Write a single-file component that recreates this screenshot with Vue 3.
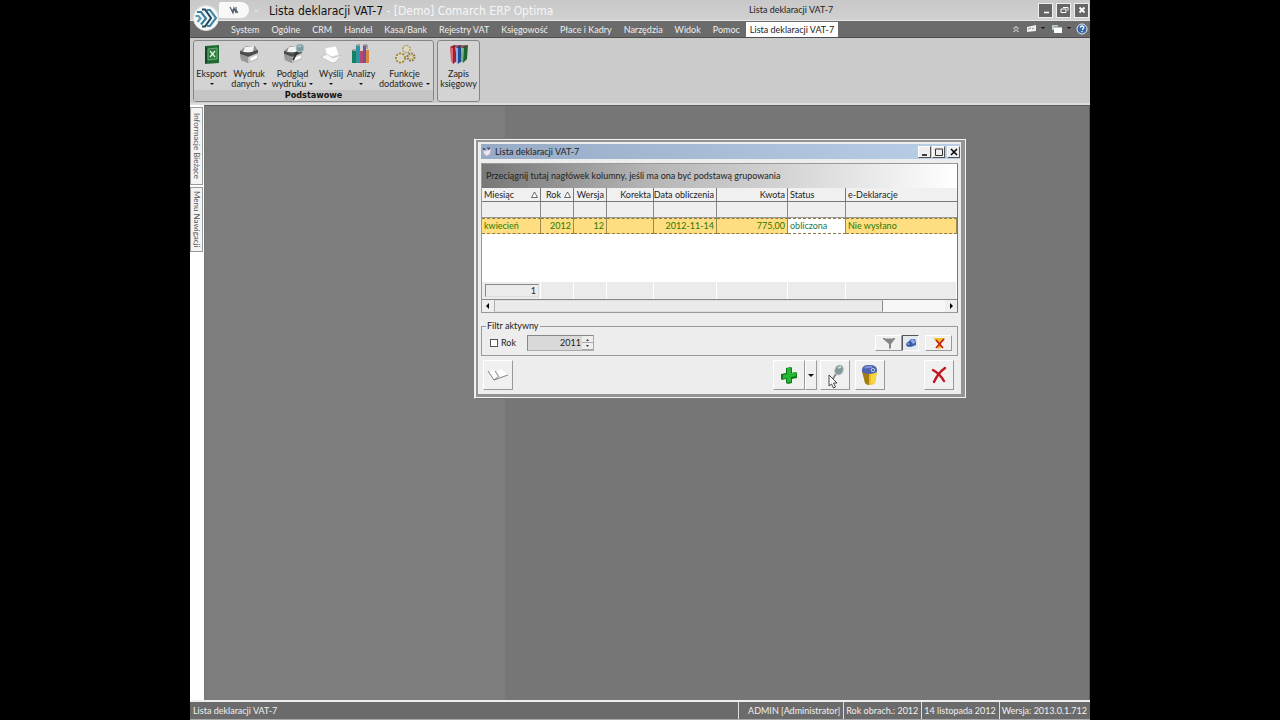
<script setup>
import { ref } from 'vue'

const menus = ['System', 'Ogólne', 'CRM', 'Handel', 'Kasa/Bank', 'Rejestry VAT', 'Księgowość', 'Płace i Kadry', 'Narzędzia', 'Widok', 'Pomoc']
const tools = [
  { id: 'export', a: 'Eksport', b: '', w: 'w35' },
  { id: 'print', a: 'Wydruk', b: 'danych', w: 'w40' },
  { id: 'preview', a: 'Podgląd', b: 'wydruku', w: 'w47' },
  { id: 'send', a: 'Wyślij', b: '', w: 'w30' },
  { id: 'chart', a: 'Analizy', b: '', w: 'w30' },
  { id: 'gears', a: 'Funkcje', b: 'dodatkowe', w: 'w57' },
]
const cols = [
  { t: 'Miesiąc', v: 'kwiecień', s: true, c: 'c1' },
  { t: 'Rok', v: '2012', s: true, r: true, c: 'c2' },
  { t: 'Wersja', v: '12', r: true, c: 'c2' },
  { t: 'Korekta', v: '', r: true, c: 'c3' },
  { t: 'Data obliczenia', v: '2012-11-14', r: true, c: 'c4' },
  { t: 'Kwota', v: '775,00', r: true, c: 'c5' },
  { t: 'Status', v: 'obliczona', c: 'c6' },
  { t: 'e-Deklaracje', v: 'Nie wysłano', c: '' },
]
const year = ref(2011)
const yearOn = ref(false)
</script>

<template>
  <div class="stage">
    <div class="app">
      <header class="titlebar">
        <button class="logo" aria-label="Menu programu">
          <svg viewBox="0 0 26 26" width="26" height="26">
            <circle cx="13" cy="13" r="12.5" fill="#f8f8f8" stroke="#ddd" />
            <g fill="none" stroke-width="2.100">
              <path d="M4 7h4l5 6.500-5 6" stroke="#367c9e" />
              <path d="M9 4.500h3l6 8.500-6 8.500H9" stroke="#1f4a60" />
              <path d="M14 5h3l6 8-6 8h-3" stroke="#3f86a6" />
              <path d="M2.500 11h3l2 2.500-3 3.500" stroke="#5b9ab3" />
            </g>
          </svg>
        </button>
        <button class="quick" aria-label="Szybki dostęp">
          <svg viewBox="0 0 10 9" width="10" height="9"><path d="M1 1l3 6 1-5 2 5V1M3 4h4l2 3" fill="none" stroke="#456" stroke-width="1.100" /></svg>
        </button>
        <span class="qmore">=</span>
        <h1>Lista deklaracji VAT-7 <span>- [Demo] Comarch ERP Optima</span></h1>
        <span class="context">Lista deklaracji VAT-7</span>
        <div class="winbtns">
          <button aria-label="Minimalizuj"><svg viewBox="0 0 14 14" width="14" height="14"><path d="M5 9.500h5" stroke="#fff" stroke-width="1.600" /></svg></button>
          <button aria-label="Przywróć"><svg viewBox="0 0 14 14" width="14" height="14"><path d="M6 4.500h5v3M4 6h5v3.500H4z" fill="none" stroke="#fff" /></svg></button>
          <button aria-label="Zamknij"><svg viewBox="0 0 14 14" width="14" height="14"><path d="M4.500 4.500l5 5M9.500 4.500l-5 5" stroke="#fff" stroke-width="1.800" /></svg></button>
        </div>
      </header>

      <nav class="menubar">
        <button v-for="m in menus" :key="m">{{ m }}</button>
        <button class="active">Lista deklaracji VAT-7</button>
        <div class="menuicons">
          <button aria-label="Zwiń wstążkę"><svg viewBox="0 0 8 8" width="8" height="8"><path d="M1.500 4L4 1.500 6.500 4M1.500 7L4 4.500 6.500 7" fill="none" stroke="#fff" /></svg></button>
          <button aria-label="Widok"><svg viewBox="0 0 22 10" width="22" height="10"><path d="M3 3l9-2v6l-9 1z" fill="#eee" /><path d="M4 5l3-1M8 5l2-1" stroke="#999" /><path d="M17 3h4l-2 2z" fill="#111" /></svg></button>
          <button aria-label="Okna"><svg viewBox="0 0 22 10" width="22" height="10"><path d="M2 1h6v5H2z" fill="#bcc" /><path d="M4 3h8v6H4z" fill="#fff" /><path d="M4 3h8" stroke="#789" /><path d="M17 3h4l-2 2z" fill="#111" /></svg></button>
          <button aria-label="Pomoc"><svg viewBox="0 0 12 12" width="12" height="12"><circle cx="6" cy="6" r="5" fill="#3567a8" stroke="#e4eaf2" /><path d="M4.200 4.700Q4.500 3 6 3q2 0 1.800 1.600Q7.600 5.600 6 6.600M6 8v1.200" fill="none" stroke="#fff" stroke-width="1.300" /></svg></button>
        </div>
      </nav>

      <section class="ribbon">
        <div class="group">
          <div class="tools">
            <button v-for="t in tools" :key="t.id" class="tool" :class="t.w">
              <svg viewBox="0 0 24 24" width="24" height="24">
                <g v-if="t.id === 'export'">
                  <path d="M5 3l14-1v18L5 21z" fill="#1d6b30" /><path d="M5 3l2 2v14l-2 2z" fill="#0e4a1d" /><path d="M8 6l9-1v11l-9 1z" fill="#2a7d3e" stroke="#8fc097" stroke-width=".7" /><path d="M10 8l5 6M15 8l-5 6" stroke="#e2f2e2" stroke-width="1.300" />
                </g>
                <g v-else-if="t.id === 'print' || t.id === 'preview'">
                  <path d="M3 8l6-5h9l3 5v8l-10 4-7-3z" fill="#8d8f90" /><path d="M8 4l9-1-1 6H6z" fill="#f2f2f2" /><path d="M3 8l8 2 10-3v3l-9 4-9-3z" fill="#4b4d4e" /><path d="M3 11l8 3v6l-7-3z" fill="#999" /><path d="M11 14l10-4v6l-10 4z" fill="#c5c5c5" /><path d="M13 15l7-3v3l-6 3z" fill="#fff" />
                  <g v-if="t.id === 'preview'"><path d="M16 9l-4 8" stroke="#333" stroke-width="1.800" /><circle cx="19" cy="5" r="4" fill="#7c9ba0" stroke="#a9c0c2" /><path d="M17 4q2-2 3 0" stroke="#d6e8e8" fill="none" /></g>
                </g>
                <g v-else-if="t.id === 'send'">
                  <path d="M6 5l11-2 3 9-12 3z" fill="#fff" stroke="#d2d2d2" stroke-width=".7" /><path d="M2 14l6-3 6 4 8-3-5 7-4 1z" fill="#f8f8f8" stroke="#bbb" stroke-width=".7" />
                </g>
                <g v-else-if="t.id === 'chart'">
                  <path d="M3 8h4v12H3z" fill="#168062" /><path d="M7 3h4v17H7z" fill="#2c96a0" /><path d="M11 8h3v12h-3z" fill="#b64774" /><path d="M14 3h3v17h-3z" fill="#765294" /><path d="M17 7h3v13h-3z" fill="#d9883b" /><path d="M3 8l1-1h3M7 3l1-1h3M14 3l1-1h3v4" fill="none" stroke="#333" stroke-width=".6" />
                </g>
                <g v-else fill="none">
                  <circle cx="7.500" cy="15" r="4.500" stroke="#a08b3c" stroke-width="2" stroke-dasharray="2 1.200" /><circle cx="7.500" cy="15" r="3" stroke="#efe3a8" />
                  <circle cx="13.500" cy="6" r="3.500" stroke="#b5a66b" stroke-width="2" stroke-dasharray="1.700 1" /><circle cx="13.500" cy="6" r="2" stroke="#f2e8b8" />
                  <circle cx="18" cy="14" r="3.500" stroke="#8a7540" stroke-width="2" stroke-dasharray="1.700 1" /><circle cx="18" cy="14" r="2" stroke="#d9c17b" />
                </g>
              </svg>
              <span>{{ t.a }}</span>
              <span class="second">{{ t.b }}<i class="caret"></i></span>
            </button>
          </div>
          <div class="caption">Podstawowe</div>
        </div>
        <div class="group single">
          <button class="tool">
            <svg viewBox="0 0 24 24" width="24" height="24">
              <path d="M3 4l5-2 2 16-4 3z" fill="#a71e30" /><path d="M3 4l3 1v16l-2-3z" fill="#dc6270" />
              <path d="M9 4l5-2 1 16-4 3z" fill="#1e4d9c" /><path d="M9 4l2 1v16l-2-2z" fill="#90b1df" />
              <path d="M15 4l6-2-1 14-4 4z" fill="#1c672f" /><path d="M15 4l2 1-1 15-2-3z" fill="#84b587" />
              <path d="M3 4l4-2h14l-4 3z" fill="#72202e" opacity=".6" />
            </svg>
            <span>Zapis</span>
            <span class="second">księgowy</span>
          </button>
        </div>
      </section>

      <main class="work">
        <aside class="side">
          <button class="tab1">Informacje Bieżące</button>
          <button class="tab2">Menu Nawigacji</button>
        </aside>
        <div class="canvas">
          <section class="dialog">
            <div class="inner">
              <header class="dtitle">
                <svg viewBox="0 0 10 10" width="10" height="10"><path d="M1 3l3 1 1-1 4-1-1 5-3 2-3-2z" fill="#eee5f3" stroke="#b8a9c8" stroke-width=".6" /><path d="M1 1l1 2 1-2M5 1h3L6 3" fill="none" stroke="#347" /></svg>
                <h2>Lista deklaracji VAT-7</h2>
                <div class="dbtns">
                  <button aria-label="Minimalizuj okno"><svg viewBox="0 0 10 10" width="10" height="10"><path d="M2 8h5" stroke="#000" stroke-width="1.500" /></svg></button>
                  <button aria-label="Maksymalizuj okno"><svg viewBox="0 0 10 10" width="10" height="10"><path d="M1.500 2h7v6.500h-7z" fill="none" stroke="#333" /></svg></button>
                  <button aria-label="Zamknij okno"><svg viewBox="0 0 10 10" width="10" height="10"><path d="M2 2l6 6M8 2L2 8" stroke="#000" stroke-width="1.500" /></svg></button>
                </div>
              </header>

              <div class="grid">
                <div class="groupby">Przeciągnij tutaj nagłówek kolumny, jeśli ma ona być podstawą grupowania</div>
                <table>
                  <colgroup><col v-for="c in cols" :key="c.t" :class="c.c" /></colgroup>
                  <thead>
                    <tr>
                      <th v-for="c in cols" :key="c.t" :class="{ r: c.r }"><div class="th"><span>{{ c.t }}</span><svg v-if="c.s" viewBox="0 0 7 7" width="7" height="7"><path d="M.500 6.500L3.500 1l3 5.500z" fill="#fff" stroke="#444" stroke-width=".8" /></svg></div></th>
                    </tr>
                    <tr class="filter"><td v-for="c in cols" :key="c.t"></td></tr>
                  </thead>
                  <tbody>
                    <tr><td v-for="c in cols" :key="c.t" :class="{ r: c.r, focus: c.t === 'Status' }">{{ c.v }}</td></tr>
                  </tbody>
                </table>
                <div class="empty"></div>
                <table class="sum">
                  <colgroup><col v-for="c in cols" :key="c.t" :class="c.c" /></colgroup>
                  <tbody><tr><td v-for="(c, i) in cols" :key="c.t"><div v-if="i === 0">1</div></td></tr></tbody>
                </table>
                <div class="hscroll">
                  <button aria-label="W lewo"><svg viewBox="0 0 6 6" width="6" height="6"><path d="M4 0v6L1 3z" /></svg></button>
                  <div class="thumb"></div>
                  <div class="track"></div>
                  <button aria-label="W prawo"><svg viewBox="0 0 6 6" width="6" height="6"><path d="M2 0v6l3-3z" /></svg></button>
                </div>
              </div>

              <fieldset class="filterbox">
                <legend>Filtr aktywny</legend>
                <div class="frow">
                  <label class="check"><input v-model="yearOn" type="checkbox" />Rok</label>
                  <div class="spin">
                    <input v-model="year" type="text" aria-label="Rok" />
                    <div class="arrows">
                      <button aria-label="Zwiększ"><svg viewBox="0 0 5 3" width="5" height="3"><path d="M1 3h3L2.500 1z" fill="#333" /></svg></button>
                      <button aria-label="Zmniejsz"><svg viewBox="0 0 5 3" width="5" height="3"><path d="M1 0h3L2.500 2z" fill="#333" /></svg></button>
                    </div>
                  </div>
                  <div class="fbtns">
                    <button class="raised" aria-label="Filtr"><svg viewBox="0 0 14 14" width="14" height="14"><path d="M1 2h12v1L9 8v4l-2 1V8L1 3z" fill="#858585" /><path d="M3 2.500h8" stroke="#bbb" /></svg></button>
                    <button class="pressed" aria-label="Zastosuj filtr"><svg viewBox="0 0 12 12" width="12" height="12"><path d="M3 5l3-3h4l1 3v3l-5 2-4-2z" fill="#3d5fae" /><path d="M5 3l3-1 3 3-3 2z" fill="#8ca9e3" /><circle cx="3.500" cy="7.500" r="2.200" fill="#2a4796" /><circle cx="3.500" cy="7" r="1" fill="#a6bce8" /></svg></button>
                    <button class="raised gap" aria-label="Wyczyść filtr"><svg viewBox="0 0 14 14" width="14" height="14"><path d="M1 2h12L9 7v5l-3 1V7z" fill="#f0bd25" /><path d="M4 4l7 8M12 3l-8 9" stroke="#c52117" stroke-width="1.800" /></svg></button>
                  </div>
                </div>
              </fieldset>

              <footer class="actions">
                <button class="big" aria-label="Książka"><svg viewBox="0 0 24 24" width="24" height="24"><path d="M3 9l5-2 5 7-5 3z" fill="#fff" /><path d="M11 8l4-2 7 6-9 2z" fill="#fff" /><path d="M2 8l6 9 14-5M8 17l4-3M9 8l4 6" fill="none" stroke="#777" stroke-width=".9" /></svg></button>
                <button class="big add" aria-label="Dodaj"><svg viewBox="0 0 24 24" width="24" height="24"><path d="M9 5l5-1 1 1v5l4-1 1 1v5l-5 1v4l-4 1-2-1v-4l-4 1-1-1v-5l5-1z" fill="#12761a" /><path d="M10 5h4v5l5-1v4l-5 1v5l-4 1v-5l-4 1v-4l4-1z" fill="#24b834" /></svg></button>
                <button class="big drop" aria-label="Dodaj, opcje"><i class="caret wide"></i></button>
                <button class="big look" aria-label="Podgląd"><svg viewBox="0 0 24 24" width="24" height="24"><path d="M13 11l-6 9" stroke="#777" stroke-width="1.500" /><ellipse cx="16" cy="7" rx="4" ry="5" fill="#839b98" stroke="#aebbb9" transform="rotate(25 16 7)" /><path d="M15 5l3-1" stroke="#d9e9e6" stroke-width="1.500" /></svg></button>
                <button class="big bin" aria-label="Usuń"><svg viewBox="0 0 24 24" width="24" height="24"><path d="M4 8h15l-2 12q-5 4-10 0z" fill="#e9bd1e" /><path d="M4 8l7 2v12q-3 0-4-2z" fill="#a37c12" /><path d="M13 10l6-1-2 11-4 1z" fill="#f8d640" /><path d="M4 9V6q1-4 6-4h4q5 1 5 5v2q-3 2-8 2-4 0-7-2z" fill="#4d65b2" /><path d="M7 5q3-2 7-1" stroke="#8198d0" stroke-width="2" fill="none" /><circle cx="15" cy="7" r="1.700" fill="none" stroke="#b8c4e7" /></svg></button>
                <button class="big close" aria-label="Zamknij listę"><svg viewBox="0 0 24 24" width="24" height="24"><path d="M6 7q7 4 11 11M18 5Q11 10 7 19" fill="none" stroke="#c2161f" stroke-width="2.400" stroke-linecap="round" /></svg></button>
              </footer>
            </div>
            <svg class="cursor" viewBox="0 0 10 15" width="10" height="15"><path d="M1 1v11l2.500-2 2 4 2-1-2-4H9z" fill="#fff" stroke="#333" stroke-width=".9" /></svg>
          </section>
        </div>
      </main>

      <footer class="status">
        <span class="grow">Lista deklaracji VAT-7</span>
        <span class="user">ADMIN [Administrator]</span>
        <span>Rok obrach.: 2012</span>
        <span>14 listopada 2012</span>
        <span>Wersja: 2013.0.1.712</span>
      </footer>
    </div>
  </div>
</template>

<style>
body { background: #000; }
</style>

<style scoped>
.stage { min-height: 100vh; padding: 0 190px; background: #000; display: flex; box-sizing: border-box; font-family: Lato, "Noto Sans", sans-serif; font-size: 9px; line-height: 10px; color: #222; }
.stage * { box-sizing: border-box; }
button { font: inherit; color: inherit; border: 0; padding: 0; margin: 0; background: none; display: flex; align-items: center; justify-content: center; white-space: nowrap; }
svg { display: block; flex: none; }
.app { flex: 1; min-width: 0; display: flex; flex-direction: column; background: #cdcdcd; }
.titlebar { height: 21px; display: flex; align-items: center; background: linear-gradient(#c8c8c8, #d1d1d1); border-bottom: 1px solid #e8e8e8; }
.logo { align-self: flex-start; width: 26px; height: 26px; margin: 5px 0 0 3px; position: relative; z-index: 2; }
.quick { width: 30px; height: 16px; background: #f8f8f8; border-radius: 2px 9px 9px 2px; }
.qmore { width: 20px; padding-left: 5px; color: #eee; font-size: 8px; }
h1 { margin: 0; flex: none; width: 480px; font-family: "DejaVu Sans Condensed", sans-serif; font-size: 12px; line-height: 18px; padding-top: 1px; font-weight: 400; color: #111; white-space: nowrap; }
h1 span { color: #f6f6f6; }
.context { flex: 1; white-space: nowrap; }
.winbtns { display: flex; gap: 3px; padding-right: 1px; }
.winbtns button { width: 15px; height: 15px; background: #666; border: 1px solid #eee; }
.menubar { height: 17px; display: flex; background: #6b6b6b; border-bottom: 1px solid #4c4c4c; padding-left: 35px; color: #eee; }
.menubar > button { padding: 1px 6px 0; }
.menubar > .active { height: 15px; margin-top: 1px; background: #fff; color: #222; padding: 0 4px; }
.menuicons { margin-left: auto; display: flex; gap: 4px; align-items: center; padding-right: 2px; }
.ribbon { height: 67px; padding: 2px 3px; display: flex; align-items: flex-start; gap: 3px; background: #cbcbcb; border-bottom: 2px solid #ddd; }
.group { height: 62px; border: 1px solid #858585; border-radius: 3px; background: #d3d3d3; }
.tools { display: flex; height: 49px; padding-top: 2px; }
.tool { flex-direction: column; justify-content: flex-start; height: 47px; }
.tool svg { height: 24px; }
.tool span { height: 10px; margin-top: 2px; }
.tool .second { margin-top: 0; display: flex; align-items: center; gap: 3px; }
.caret { width: 0; height: 0; border: 2px solid transparent; border-top: 2px solid #111; border-bottom: 0; }
.wide { border-width: 3px 3px 0; }
.w35 { width: 35px; } .w40 { width: 40px; } .w47 { width: 47px; } .w30 { width: 30px; } .w57 { width: 57px; }
.caption { text-align: center; font-family: "DejaVu Sans Condensed", sans-serif; font-weight: 700; height: 11px; background: #c5c5c5; color: #111; }
.single { width: 43px; padding-top: 2px; }
.single .tool { width: 100%; }
.work { flex: 1; display: flex; }
.side { width: 15px; background: #fff; border-right: 1px solid #777; padding-top: 2px; display: flex; flex-direction: column; gap: 2px; }
.side button { width: 13px; background: #f4f4f4; border: 1px solid #999; writing-mode: vertical-rl; color: #555; font-size: 8px; }
.tab1 { height: 78px; }
.tab2 { height: 65px; }
.canvas { flex: 1; position: relative; background: linear-gradient(90deg, #7d7d7d 300px, #767676 300px); border: 1px solid #5d5d5d; border-width: 1px 1px 0 0; }
.dialog { position: absolute; left: 269px; top: 32px; width: 493px; border: 1px solid #777; border-left-color: #eee; background: #f2f2f2; padding: 1px; }
.inner { border: 3px solid #949494; border-width: 2px 4px 3px 2px; background: #ededed; padding: 2px 3px 4px 3px; }
.dtitle { height: 15px; display: flex; align-items: center; background: linear-gradient(90deg, #98abc6, #b9cee7); margin: 0 -2px 4px 0; padding: 0 0 0 1px; }
h2 { margin: 0; padding-left: 3px; font-size: 9px; line-height: 12px; font-weight: 400; flex: 1; }
.dbtns { display: flex; gap: 1px; }
.dbtns button { width: 13px; height: 12px; background: #eee; border: 1px solid; border-color: #fff #555 #555 #fff; }
.dbtns button:last-child { margin-left: 1px; }
.grid { border: 1px solid #999; border-right-color: #777; background: #fff; }
.groupby { height: 24px; padding: 0 4px; display: flex; align-items: center; background: linear-gradient(90deg, #777, #b5b5b5 35%, #d5d5d5 65%, #fff); }
table { width: 100%; table-layout: fixed; border-collapse: separate; border-spacing: 0; }
.c1 { width: 59px; } .c2 { width: 33px; } .c3 { width: 47px; } .c4 { width: 63px; } .c5 { width: 71px; } .c6 { width: 58px; }
th { height: 14px; padding: 0 2px; font-weight: 400; text-align: left; background: #f0f0f0; border: 1px solid #777; border-width: 0 1px 1px 0; white-space: nowrap; }
.th { display: flex; align-items: center; justify-content: space-between; }
.r .th { justify-content: flex-end; gap: 3px; }
.filter td { height: 16px; padding: 0; background: #efefef; border-right: 1px solid #888; border-bottom: 1px solid #999; }
th:last-child, .filter td:last-child { border-right: 0; }
tbody td { height: 16px; padding: 0 2px; white-space: nowrap; background: #fede81; color: #2b7800; border: 1px dashed #8e7c42; border-width: 1px 0; border-right: 1px solid #9d8a4f; }
td.r { text-align: right; }
td.focus { background: #fff; color: #23784c; }
.empty { height: 48px; }
.sum td { height: 17px; padding: 1px 1px 1px 3px; background: #ebebeb; border: 0; border-right: 1px solid #fff; color: #222; }
.sum td div { height: 13px; border: 1px solid; border-color: #888 #ddd #ddd #888; text-align: right; padding: 1px 2px 0; }
.hscroll { display: flex; height: 13px; border-top: 1px solid #888; background: #f7f7f7; }
.hscroll button { width: 12px; background: #eee; }
.thumb { flex: 390; background: #ebebeb; border: 1px solid; border-color: #ddd #888 #ddd #aaa; }
.track { flex: 63; }
.filterbox { margin: 8px 0 0; padding: 0 4px; border: 1px solid #999; height: 35px; min-width: 0; }
legend { padding: 0 1px; line-height: 10px; }
.frow { display: flex; align-items: center; height: 24px; }
.check { display: flex; align-items: center; gap: 3px; width: 41px; padding-left: 4px; }
.check input { appearance: none; width: 8px; height: 8px; margin: 0; border: 1px solid #555; background: #fff; }
.spin { width: 67px; height: 16px; display: flex; border: 1px solid; border-color: #888 #aaa #aaa #888; background: #d9d9d9; }
.spin input { flex: 1; min-width: 0; border: 0; padding: 0 1px; background: none; font: inherit; color: #222; text-align: right; }
.arrows { width: 11px; display: flex; flex-direction: column; background: #eee; }
.arrows button { flex: 1; border-bottom: 1px solid #aaa; }
.fbtns { margin-left: auto; display: flex; padding-right: 1px; }
.raised, .pressed, .big { border: 1px solid; border-color: #fff #999 #999 #fff; background: #f0f0f0; }
.raised { width: 27px; height: 16px; }
.pressed { width: 17px; height: 16px; border-color: #555 #fff #fff #555; background: #e4e8ef; }
.gap { margin-left: 6px; }
.actions { display: flex; margin-top: 4px; padding: 0 4px 0 2px; }
.big { width: 30px; height: 30px; }
.add { margin-left: auto; width: 32px; }
.drop { width: 12px; }
.look { margin-left: 3px; }
.bin { margin-left: 5px; }
.close { margin-left: 39px; }
.cursor { position: absolute; left: 353px; top: 235px; }
.status { height: 20px; display: flex; border-top: 2px solid #eee; background: #6b6b6b; color: #f0f0f0; border-bottom: 1px solid #aaa; }
.status span { display: flex; align-items: center; padding: 0 3px 0 2px; border-left: 1px solid #ddd; white-space: nowrap; }
.status .grow { flex: 1; border-left: 0; padding-left: 3px; }
.status .user { padding-left: 9px; }
</style>
